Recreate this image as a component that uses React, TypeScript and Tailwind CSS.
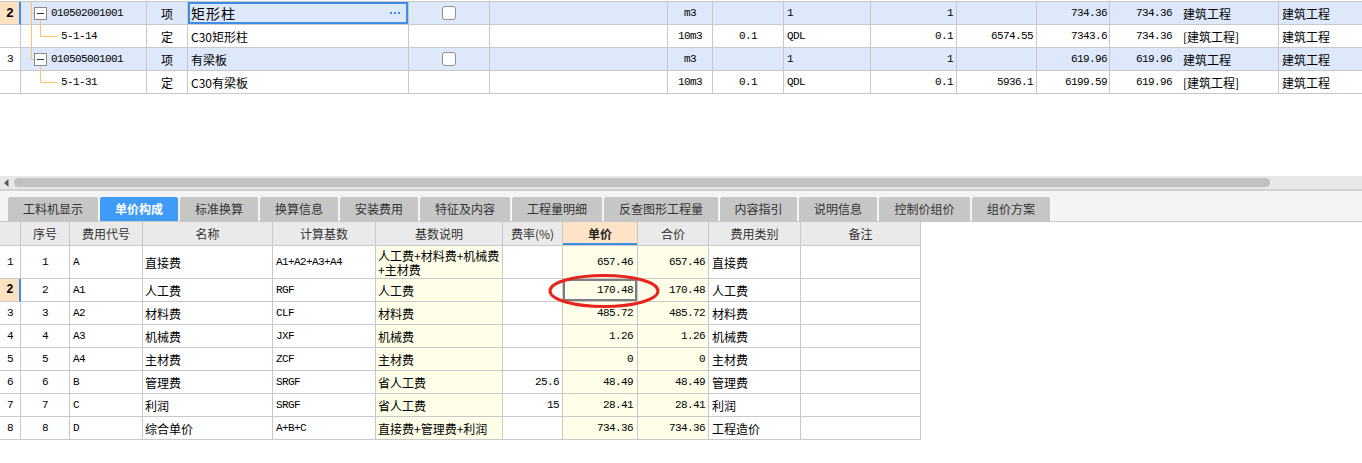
import React from 'react';

const zh = "font-['Noto_Sans_CJK_SC',sans-serif] text-[12px] leading-[13px]";
const mono = "font-['Liberation_Mono','Noto_Sans_CJK_SC',monospace] text-[11px] tracking-[-0.6px] leading-[13px]";
const cell = 'border-r border-b border-[#c8c8c8] flex items-center overflow-hidden whitespace-nowrap';

type TopItem = {
  no: string;
  parent: boolean;
  last?: boolean;
  selected?: boolean;
  code: string;
  kind: string;
  name: string;
  unit: string;
  coef: string;
  qty: string;
  qty2: string;
  price: string;
  total: string;
  unitTotal: string;
  cat: string;
  cat2: string;
};

const topRows: TopItem[] = [
  { no: '2', parent: true, selected: true, code: '010502001001', kind: '项', name: '矩形柱', unit: 'm3', coef: '', qty: '1', qty2: '1', price: '', total: '734.36', unitTotal: '734.36', cat: '建筑工程', cat2: '建筑工程' },
  { no: '', parent: false, code: '5-1-14', kind: '定', name: 'C30矩形柱', unit: '10m3', coef: '0.1', qty: 'QDL', qty2: '0.1', price: '6574.55', total: '7343.6', unitTotal: '734.36', cat: '[建筑工程]', cat2: '建筑工程' },
  { no: '3', parent: true, last: true, code: '010505001001', kind: '项', name: '有梁板', unit: 'm3', coef: '', qty: '1', qty2: '1', price: '', total: '619.96', unitTotal: '619.96', cat: '建筑工程', cat2: '建筑工程' },
  { no: '', parent: false, last: true, code: '5-1-31', kind: '定', name: 'C30有梁板', unit: '10m3', coef: '0.1', qty: 'QDL', qty2: '0.1', price: '5936.1', total: '6199.59', unitTotal: '619.96', cat: '[建筑工程]', cat2: '建筑工程' },
];

const tabs = [
  { label: '工料机显示', w: 'w-[90px]' },
  { label: '单价构成', w: 'w-[78px]', active: true },
  { label: '标准换算', w: 'w-[78px]' },
  { label: '换算信息', w: 'w-[78px]' },
  { label: '安装费用', w: 'w-[78px]' },
  { label: '特征及内容', w: 'w-[90px]' },
  { label: '工程量明细', w: 'w-[90px]' },
  { label: '反查图形工程量', w: 'w-[114px]' },
  { label: '内容指引', w: 'w-[77px]' },
  { label: '说明信息', w: 'w-[78px]' },
  { label: '控制价组价', w: 'w-[91px]' },
  { label: '组价方案', w: 'w-[78px]' },
];

const bottomRows = [
  ['1', '1', 'A', '直接费', 'A1+A2+A3+A4', '人工费+材料费+机械费|+主材费', '', '657.46', '657.46', '直接费'],
  ['2', '2', 'A1', '人工费', 'RGF', '人工费', '', '170.48', '170.48', '人工费'],
  ['3', '3', 'A2', '材料费', 'CLF', '材料费', '', '485.72', '485.72', '材料费'],
  ['4', '4', 'A3', '机械费', 'JXF', '机械费', '', '1.26', '1.26', '机械费'],
  ['5', '5', 'A4', '主材费', 'ZCF', '主材费', '', '0', '0', '主材费'],
  ['6', '6', 'B', '管理费', 'SRGF', '省人工费', '25.6', '48.49', '48.49', '管理费'],
  ['7', '7', 'C', '利润', 'SRGF', '省人工费', '15', '28.41', '28.41', '利润'],
  ['8', '8', 'D', '综合单价', 'A+B+C', '直接费+管理费+利润', '', '734.36', '734.36', '工程造价'],
];

const TreeLines = ({ item }: { item: TopItem }) => (
  <svg className="absolute left-0 top-0 overflow-visible" width="40" height="23">
    {item.parent ? (
      <>
        <line x1="10.5" y1="-1" x2="10.5" y2={item.last ? 11.5 : 23} stroke="#fbc56f" />
        <line x1="10.5" y1="11.5" x2="13.5" y2="11.5" stroke="#fbc56f" />
        <line x1="19.5" y1="17" x2="19.5" y2="23" stroke="#fbc56f" />
        <rect x="13.5" y="5.5" width="12" height="12" fill="#fff" stroke="#8a8a8a" />
        <line x1="16" y1="11.5" x2="23" y2="11.5" stroke="#333" />
      </>
    ) : (
      <>
        {!item.last && <line x1="10.5" y1="-1" x2="10.5" y2="23" stroke="#fbc56f" />}
        <line x1="19.5" y1="-1" x2="19.5" y2="11.5" stroke="#fbc56f" />
        <line x1="19.5" y1="11.5" x2="36" y2="11.5" stroke="#fbc56f" />
      </>
    )}
  </svg>
);

const Checkbox = () => (
  <div className="w-[14px] h-[14px] rounded-[3px] border border-[#8f8f8f] bg-white" />
);

const TopGrid = () => (
  <div className="grid grid-cols-[21px_126px_41px_221px_81px_178px_45px_71px_87px_86px_80px_73px_68px_101px_1fr] border-t border-[#c8c8c8]">
    {topRows.map((r, i) => {
      const bg = r.parent ? 'bg-[#dde8fb]' : 'bg-white';
      return (
        <React.Fragment key={i}>
          <div
            className={`${cell} h-[23px] justify-center ${mono} ${
              r.selected ? 'bg-[#fde2c2] font-bold text-[13px] border-r-2 border-r-[#3b8de6]' : 'bg-white'
            }`}
          >
            {r.no}
          </div>
          <div className={`${cell} ${bg} h-[23px] relative ${mono} ${r.parent ? 'pl-[30px]' : 'pl-[40px]'}`}>
            <TreeLines item={r} />
            <span className="relative">{r.code}</span>
          </div>
          <div className={`${cell} ${bg} h-[23px] justify-center ${zh}`}>{r.kind}</div>
          {r.selected ? (
            <div className={`${cell} ${bg} h-[23px] pl-[3px] pr-[7px] justify-between shadow-[inset_0_0_0_2px_#3b8de6] font-['Noto_Sans_CJK_SC',sans-serif] text-[14px] tracking-[1px]`}>
              <span>{r.name}</span>
              <svg width="11" height="3" viewBox="0 0 11 3">
                <rect x="0" y="0" width="2" height="2" fill="#3b8de6" />
                <rect x="4" y="0" width="2" height="2" fill="#3b8de6" />
                <rect x="8" y="0" width="2" height="2" fill="#3b8de6" />
              </svg>
            </div>
          ) : (
            <div className={`${cell} ${bg} h-[23px] pl-[3px] ${zh}`}>{r.name}</div>
          )}
          <div className={`${cell} ${bg} h-[23px] justify-center`}>{r.parent && <Checkbox />}</div>
          <div className={`${cell} ${bg} h-[23px]`} />
          <div className={`${cell} ${bg} h-[23px] justify-center ${mono}`}>{r.unit}</div>
          <div className={`${cell} ${bg} h-[23px] justify-center ${mono}`}>{r.coef}</div>
          <div className={`${cell} ${bg} h-[23px] pl-[3px] ${mono}`}>{r.qty}</div>
          <div className={`${cell} ${bg} h-[23px] justify-end pr-[3px] ${mono}`}>{r.qty2}</div>
          <div className={`${cell} ${bg} h-[23px] justify-end pr-[3px] ${mono}`}>{r.price}</div>
          <div className={`${cell} ${bg} h-[23px] justify-end pr-[2px] ${mono}`}>{r.total}</div>
          <div className={`border-b border-[#c8c8c8] flex items-center ${bg} h-[23px] justify-end pr-[6px] ${mono}`}>{r.unitTotal}</div>
          <div className={`${cell} ${bg} h-[23px] pl-[5px] ${zh}`}>{r.cat}</div>
          <div className={`border-b border-[#c8c8c8] flex items-center ${bg} h-[23px] pl-[3px] ${zh}`}>{r.cat2}</div>
        </React.Fragment>
      );
    })}
  </div>
);

const ScrollBar = () => (
  <div className="h-[15px] bg-[#e8e8e8] border-b-2 border-[#d2d2d2] flex items-center">
    <svg className="ml-[4px] mr-[5px]" width="5" height="8" viewBox="0 0 5 8">
      <path d="M4.5 0 L0 4 L4.5 8 Z" fill="#5a5a5a" />
    </svg>
    <div className="w-[1256px] h-[9px] rounded-full bg-[#c1c1c1]" />
  </div>
);

const TabBar = () => (
  <div className="h-[31px] bg-[#f4f4f4] border-b border-[#c8c8c8] flex items-end gap-[2px] pl-[8px]">
    {tabs.map((t) => (
      <div
        key={t.label}
        className={`${t.w} h-[24px] rounded-t-[2px] flex items-center justify-center font-['Noto_Sans_CJK_SC',sans-serif] text-[12px] ${
          t.active ? 'bg-[#3e9bf7] text-white font-bold' : 'bg-[#c6c6c6] text-[#333]'
        }`}
      >
        {t.label}
      </div>
    ))}
  </div>
);

const headers = ['', '序号', '费用代号', '名称', '计算基数', '基数说明', '费率(%)', '单价', '合价', '费用类别', '备注'];

const BottomTable = () => (
  <div className="relative w-[921px]">
    <div className="grid grid-cols-[21px_49px_73px_130px_103px_127px_60px_75px_71px_92px_120px]">
      {headers.map((h, i) => (
        <div
          key={i}
          className={`${cell} h-[24px] justify-center ${zh} ${
            h === '单价'
              ? 'bg-[#fde4c7] font-bold text-[#222] shadow-[inset_0_-2px_0_#3b8de6]'
              : 'bg-[#eaeaea] text-[#333]'
          }`}
        >
          {h}
        </div>
      ))}
      {bottomRows.map((r, i) => {
        const h = i === 0 ? 'h-[33px]' : 'h-[23px]';
        const sel = r[0] === '2';
        const lines = r[5].split('|');
        return (
          <React.Fragment key={i}>
            <div
              className={`${cell} ${h} justify-center ${mono} ${
                sel ? 'bg-[#fde2c2] font-bold text-[12px] border-r-2 border-r-[#3b8de6]' : 'bg-white'
              }`}
            >
              {r[0]}
            </div>
            <div className={`${cell} ${h} justify-center bg-white ${mono}`}>{r[1]}</div>
            <div className={`${cell} ${h} pl-[3px] bg-white ${mono}`}>{r[2]}</div>
            <div className={`${cell} ${h} pl-[2px] bg-white ${zh}`}>{r[3]}</div>
            <div className={`${cell} ${h} pl-[3px] bg-white ${mono}`}>{r[4]}</div>
            <div className={`${cell} ${h} pl-[2px] bg-[#fffee8] ${zh}`}>
              {lines.length > 1 ? (
                <div className="flex flex-col gap-[1px]">
                  {lines.map((line) => (
                    <span key={line} className="leading-[13px]">{line}</span>
                  ))}
                </div>
              ) : (
                r[5]
              )}
            </div>
            <div className={`${cell} ${h} justify-end pr-[3px] bg-white ${mono}`}>{r[6]}</div>
            <div
              className={`${cell} ${h} justify-end pr-[4px] bg-[#fffee8] ${mono} ${
                sel ? 'shadow-[inset_0_0_0_2px_#7e7e7e]' : ''
              }`}
            >
              {r[7]}
            </div>
            <div className={`${cell} ${h} justify-end pr-[3px] bg-[#fffee8] ${mono}`}>{r[8]}</div>
            <div className={`${cell} ${h} pl-[3px] bg-white ${zh}`}>{r[9]}</div>
            <div className={`${cell} ${h} bg-white`} />
          </React.Fragment>
        );
      })}
    </div>
    <svg className="absolute left-[548px] top-[52px] pointer-events-none" width="112" height="34" viewBox="0 0 112 34">
      <ellipse cx="56" cy="17" rx="54" ry="15.5" fill="none" stroke="#e6241d" strokeWidth="3" />
    </svg>
  </div>
);

export default function App() {
  return (
    <div className="w-[1362px] h-[463px] bg-white text-black overflow-hidden">
      <div className="h-[1px]" />
      <TopGrid />
      <div className="h-[82px]" />
      <ScrollBar />
      <TabBar />
      <BottomTable />
    </div>
  );
}
